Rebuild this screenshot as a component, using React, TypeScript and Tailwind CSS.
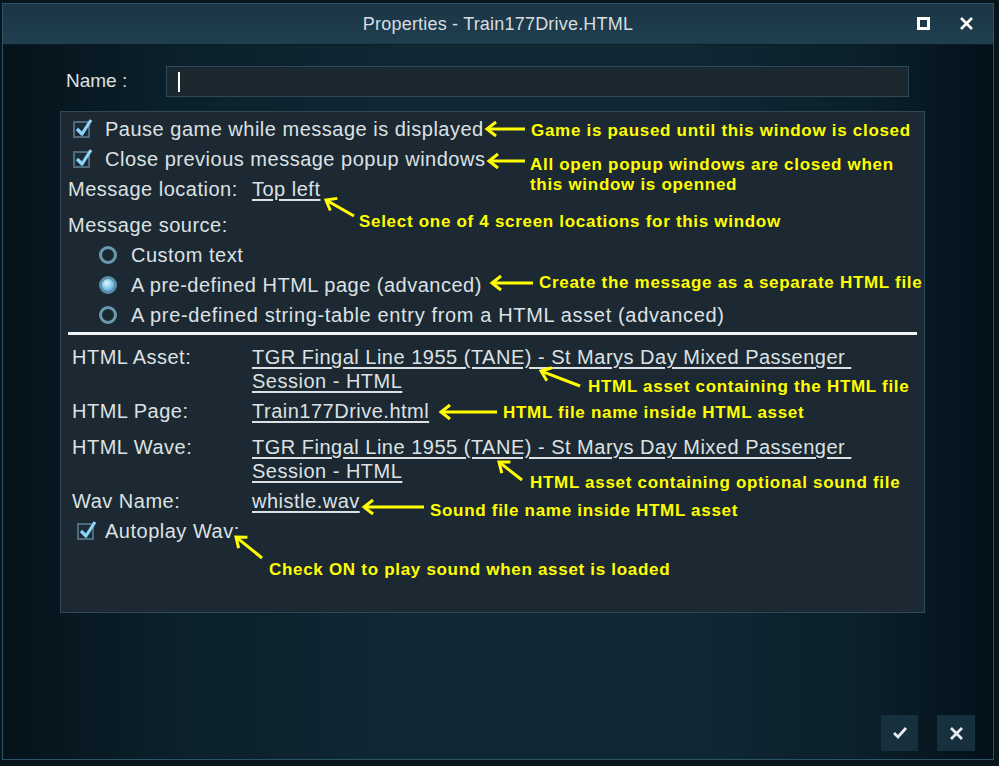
import React from 'react';

const FONT = { fontFamily: '"Liberation Sans", Arial, sans-serif' };

// tail -> head, page coordinates
const arrows: [number, number, number, number][] = [
  [525, 129, 487, 129],
  [525, 161, 489, 161],
  [354, 216, 326, 200],
  [533, 283, 492, 283],
  [580, 386, 541, 371],
  [497, 412, 441, 412],
  [522, 480, 499, 462],
  [424, 507, 364, 507],
  [262, 558, 236, 537],
];

const notes = [
  { x: 531, y: 121, text: 'Game is paused until this window is closed' },
  { x: 530, y: 155, text: 'All open popup windows are closed when' },
  { x: 530, y: 175, text: 'this window is openned' },
  { x: 359, y: 212, text: 'Select one of 4 screen locations for this window' },
  { x: 539, y: 273, text: 'Create the message as a separate HTML file' },
  { x: 588, y: 377, text: 'HTML asset containing the HTML file' },
  { x: 503, y: 403, text: 'HTML file name inside HTML asset' },
  { x: 530, y: 473, text: 'HTML asset containing optional sound file' },
  { x: 430, y: 501, text: 'Sound file name inside HTML asset' },
  { x: 269, y: 560, text: 'Check ON to play sound when asset is loaded' },
];

const Arrow = ({ a }: { a: [number, number, number, number] }) => {
  const [tx, ty, hx, hy] = a;
  const len = Math.hypot(tx - hx, ty - hy);
  const dx = (tx - hx) / len;
  const dy = (ty - hy) / len;
  const nx = -dy;
  const ny = dx;
  const p1 = `${hx + dx * 9 + nx * 7},${hy + dy * 9 + ny * 7}`;
  const p2 = `${hx + dx * 9 - nx * 7},${hy + dy * 9 - ny * 7}`;
  return (
    <g stroke="#ffff00" strokeWidth="3" fill="none">
      <line x1={tx} y1={ty} x2={hx + dx * 1} y2={hy + dy * 1} />
      <polyline points={`${p1} ${hx},${hy} ${p2}`} strokeLinejoin="miter" />
    </g>
  );
};

const Check = () => (
  <span className="relative inline-block w-[17px] h-[17px] border-2 border-[#4d6b7a] bg-[#1a2c38] shrink-0">
    <svg className="absolute -left-[1px] -top-[5px]" width="20" height="20" viewBox="0 0 20 20">
      <path d="M3 11 L8 16 L17 2" stroke="#8fd3f5" strokeWidth="3.2" fill="none" strokeLinejoin="round" />
    </svg>
  </span>
);

const Radio = ({ on }: { on?: boolean }) => (
  <span
    className={`inline-block w-[18px] h-[18px] rounded-full border-[3px] shrink-0 ${
      on
        ? 'border-[#5b8fa8] bg-[radial-gradient(circle_at_40%_35%,#e2f6ff,#7cc6ee_55%,#3d8cbc)]'
        : 'border-[#6b9aae] bg-[#1a2a33]'
    }`}
  />
);

export default function App() {
  return (
    <div className="relative w-[999px] h-[766px] overflow-hidden bg-[#08161c] text-[#dde1e4]" style={FONT}>
      {/* window */}
      <div className="absolute left-[2px] top-[3px] w-[992px] h-[757px] flex flex-col border border-[#2b5566] bg-[linear-gradient(90deg,#05121a_0%,#0a1f29_15%,#0f2834_40%,#0f2834_70%,#0a1f29_88%,#03101a_100%)]">
        {/* title bar */}
        <div className="relative h-[41px] shrink-0 flex items-center justify-center bg-[linear-gradient(180deg,#1b3646,#1f3e4f)] border-b border-[#0c1c24]">
          <span className="text-[18px] tracking-[0.2px] text-[#d8dde0]">Properties - Train177Drive.HTML</span>
          <span className="absolute left-[914px] top-[13px] w-[13px] h-[13px] border-[3px] border-white" />
          <svg className="absolute left-[956px] top-[12px]" width="15" height="15" viewBox="0 0 15 15">
            <path d="M2 2 L13 13 M13 2 L2 13" stroke="white" strokeWidth="2.6" />
          </svg>
        </div>

        {/* body */}
        <div className="flex-1 flex flex-col pl-[57px] pr-[68px]">
          <div className="flex items-center mt-[21px] h-[31px]">
            <span className="w-[106px] pl-[6px] text-[19px]">Name :</span>
            <div className="flex-1 h-[31px] mr-[16px] border border-[#2a4a5a] bg-[#1b2830] flex items-center pl-[11px]">
              <span className="w-[2px] h-[20px] bg-white" />
            </div>
          </div>

          <div className="mt-[14px] h-[502px] w-[865px] border border-[#2e4a58] bg-[#1c2932] text-[20px] tracking-[0.5px] pt-[2px]">
            <div className="h-[30px] flex items-center pl-[12px] gap-[15px]">
              <Check />
              <span>Pause game while message is displayed</span>
            </div>
            <div className="h-[30px] flex items-center pl-[12px] gap-[15px]">
              <Check />
              <span>Close previous message popup windows</span>
            </div>
            <div className="h-[30px] flex items-center pl-[7px]">
              <span className="w-[184px]">Message location:</span>
              <span className="underline underline-offset-[3px]">Top left</span>
            </div>
            <div className="h-[30px] mt-[6px] flex items-center pl-[7px]">
              <span>Message source:</span>
            </div>
            <div className="h-[30px] flex items-center pl-[38px] gap-[14px]">
              <Radio />
              <span>Custom text</span>
            </div>
            <div className="h-[30px] flex items-center pl-[38px] gap-[14px]">
              <Radio on />
              <span>A pre-defined HTML page (advanced)</span>
            </div>
            <div className="h-[30px] flex items-center pl-[38px] gap-[14px]">
              <Radio />
              <span className="tracking-[0.65px]">A pre-defined string-table entry from a HTML asset (advanced)</span>
            </div>
            <div className="h-[3px] mt-[2px] mx-[7px] bg-[#f2f4f5]" />

            <div className="mt-[10px] pl-[11px] leading-[24px]">
              <div className="flex">
                <span className="w-[180px]">HTML Asset:</span>
                <span className="underline underline-offset-[3px]">
                  TGR Fingal Line 1955 (TANE) - St Marys Day Mixed Passenger&nbsp;
                  <br />
                  Session - HTML
                </span>
              </div>
              <div className="flex mt-[6px]">
                <span className="w-[180px]">HTML Page:</span>
                <span className="underline underline-offset-[3px]">Train177Drive.html</span>
              </div>
              <div className="flex mt-[12px]">
                <span className="w-[180px]">HTML Wave:</span>
                <span className="underline underline-offset-[3px]">
                  TGR Fingal Line 1955 (TANE) - St Marys Day Mixed Passenger&nbsp;
                  <br />
                  Session - HTML
                </span>
              </div>
              <div className="flex mt-[6px]">
                <span className="w-[180px]">Wav Name:</span>
                <span className="underline underline-offset-[3px]">whistle.wav</span>
              </div>
              <div className="flex items-center mt-[6px] h-[24px] pl-[5px] gap-[11px]">
                <Check />
                <span>Autoplay Wav:</span>
              </div>
            </div>
          </div>

          <div className="mt-auto mb-[8px] mr-[-50px] flex justify-end gap-[19px]">
            <button className="w-[37px] h-[36px] bg-[#17303e] flex items-center justify-center">
              <svg width="16" height="14" viewBox="0 0 16 14">
                <path d="M2 7 L6 11 L14 2" stroke="#e8ecee" strokeWidth="2.8" fill="none" />
              </svg>
            </button>
            <button className="w-[38px] h-[36px] bg-[#17303e] flex items-center justify-center">
              <svg width="15" height="15" viewBox="0 0 15 15">
                <path d="M2 2 L13 13 M13 2 L2 13" stroke="#e8ecee" strokeWidth="2.8" />
              </svg>
            </button>
          </div>
        </div>
      </div>

      {/* annotations */}
      <svg className="absolute inset-0 pointer-events-none" width="999" height="766">
        {arrows.map((a, i) => (
          <Arrow key={i} a={a} />
        ))}
      </svg>
      {notes.map((n, i) => (
        <div
          key={i}
          className="absolute text-[17px] leading-[20px] font-bold text-[#ffff00] tracking-[0.7px] whitespace-nowrap"
          style={{ left: n.x, top: n.y }}
        >
          {n.text}
        </div>
      ))}
    </div>
  );
}
